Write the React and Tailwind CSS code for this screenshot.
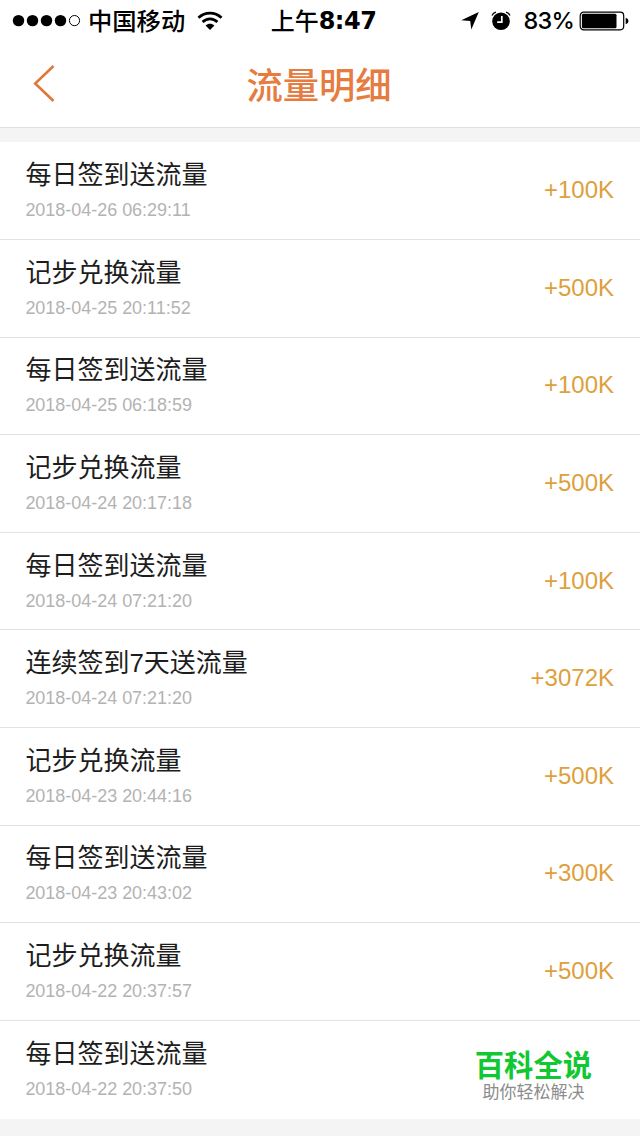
import React from 'react';

const records = [
  { title: '每日签到送流量', time: '2018-04-26 06:29:11', amount: '+100K' },
  { title: '记步兑换流量', time: '2018-04-25 20:11:52', amount: '+500K' },
  { title: '每日签到送流量', time: '2018-04-25 06:18:59', amount: '+100K' },
  { title: '记步兑换流量', time: '2018-04-24 20:17:18', amount: '+500K' },
  { title: '每日签到送流量', time: '2018-04-24 07:21:20', amount: '+100K' },
  { title: '连续签到7天送流量', time: '2018-04-24 07:21:20', amount: '+3072K' },
  { title: '记步兑换流量', time: '2018-04-23 20:44:16', amount: '+500K' },
  { title: '每日签到送流量', time: '2018-04-23 20:43:02', amount: '+300K' },
  { title: '记步兑换流量', time: '2018-04-22 20:37:57', amount: '+500K' },
  { title: '每日签到送流量', time: '2018-04-22 20:37:50', amount: null },
];

const StatusBar = () => {
  return (
    <div className="grid h-10 grid-cols-[1fr_auto_1fr] items-center pl-3 pr-[11px] pt-[1px] text-black">
      <div className="flex items-center">
        <svg width="70" height="14" viewBox="0 0 70 14">
          <circle cx="6.5" cy="6.6" r="5.7" />
          <circle cx="20.5" cy="6.6" r="5.7" />
          <circle cx="34.5" cy="6.6" r="5.7" />
          <circle cx="48.5" cy="6.6" r="5.7" />
          <circle cx="62.5" cy="6.6" r="5.1" fill="none" stroke="currentColor" strokeWidth="1" />
        </svg>
        <span className="ml-[6px] pb-[2px] font-['Noto_Sans_CJK_SC',sans-serif] text-[24.3px] font-medium leading-[38px]">
          中国移动
        </span>
        <svg className="ml-[12px]" width="26" height="20" viewBox="0 0 26 20" fill="none" stroke="currentColor" strokeWidth="2.8">
          <path d="M1.5 6.8C8 .6 18 .6 24.5 6.8" />
          <path d="M5.6 11C10 6.8 16 6.8 20.4 11" />
          <path d="M8.6 14.6C11.2 12.2 14.8 12.2 17.4 14.6L13 18.9Z" fill="currentColor" stroke="none" />
        </svg>
      </div>

      <div className="flex items-center pl-[6px]">
        <span className="pb-[2px] font-['Noto_Sans_CJK_SC',sans-serif] text-[24px] font-medium leading-[38px]">上午</span>
        <span className="font-['DejaVu_Sans',sans-serif] text-[24px] font-bold leading-10 tracking-[-0.5px]">8:47</span>
      </div>

      <div className="flex items-center justify-end">
        <svg width="18" height="18" viewBox="0 0 18 18">
          <path d="M17.8 0L10.3 17.6L9.2 8.9L.3 8.2Z" />
        </svg>
        <svg className="ml-[12px]" width="20" height="20" viewBox="0 0 20 20">
          <circle cx="10" cy="10.2" r="8.8" />
          <path d="M1 4.5Q2.2 1.8 5 1.1M19 4.5Q17.8 1.8 15 1.1" fill="none" stroke="currentColor" strokeWidth="1.3" />
          <path d="M10.8 5V11.2H6.2" fill="none" stroke="white" strokeWidth="1.7" />
        </svg>
        <span className="ml-[13px] font-['Inter',sans-serif] text-[23.5px] font-medium leading-10 tracking-[-0.8px]">83%</span>
        <svg className="ml-[5px]" width="50" height="20" viewBox="0 0 50 20">
          <rect x="1.2" y="1.2" width="43.5" height="17.6" rx="3.5" fill="none" stroke="currentColor" strokeWidth="1.2" />
          <rect x="2.9" y="2.8" width="34.6" height="14.4" rx="1.5" />
          <path d="M46.7 6.8Q49.5 7.5 49.5 10T46.7 13.2Z" />
        </svg>
      </div>
    </div>
  );
};

const Header = () => {
  return (
    <div className="grid h-[88px] grid-cols-[1fr_auto_1fr] items-center border-b border-[#e0e0e0]">
      <button type="button" className="ml-[33px] w-6">
        <svg width="24" height="38" viewBox="0 0 24 38" fill="none" stroke="#e0773c" strokeWidth="2.6">
          <path d="M20.5 1L2.2 18.5L20.5 36" />
        </svg>
      </button>
      <h1 className="pr-[2px] pt-[8px] text-[36.3px] font-medium leading-none text-[#e67c40]">流量明细</h1>
    </div>
  );
};

const RecordItem = ({ title, time, amount }) => {
  return (
    <li className="flex h-[97.6px] items-center justify-between border-t border-[#e2e2e2] pl-[25.4px] pr-[26px] first:border-[#f4f4f4] last:h-[99px] last:pb-[1.4px]">
      <div className="pt-[0.1px]">
        <p className="text-[26px] leading-[36px] text-[#1d1d1d]">{title}</p>
        <p className="mt-[3px] text-[18px] leading-[28px] tracking-[-0.03px] text-[#b3b3b3]">{time}</p>
      </div>
      {amount ? (
        <span className="pb-[0.9px] text-[24px] leading-8 text-[#dda03c]">{amount}</span>
      ) : (
        <div className="mr-[22px] pt-[15px] text-center">
          <p className="text-[29.3px] font-bold leading-[33px] text-[#11c832]">百科全说</p>
          <p className="text-[17px] leading-[22px] text-[#8c8c8c]">助你轻松解决</p>
        </div>
      )}
    </li>
  );
};

const App = () => {
  return (
    <div className="h-[1136px] w-[640px] overflow-hidden bg-[#f4f4f4] font-['Liberation_Sans','Noto_Sans_CJK_SC',sans-serif]">
      <div className="bg-white">
        <StatusBar />
        <Header />
      </div>
      <ul className="mt-[13.45px] bg-white">
        {records.map((record, index) => (
          <RecordItem key={index} {...record} />
        ))}
      </ul>
    </div>
  );
};

export default App;
